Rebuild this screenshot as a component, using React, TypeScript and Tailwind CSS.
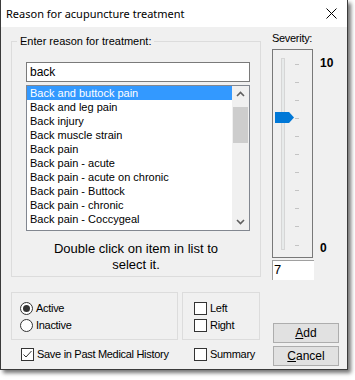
import React from "react";

const items = [
  "Back and buttock pain",
  "Back and leg pain",
  "Back injury",
  "Back muscle strain",
  "Back pain",
  "Back pain - acute",
  "Back pain - acute on chronic",
  "Back pain - Buttock",
  "Back pain - chronic",
  "Back pain - Coccygeal",
];

function CheckBox({ checked }: { checked?: boolean }) {
  return (
    <span className="w-[13px] h-[13px] border border-[#333333] bg-white flex items-center justify-center shrink-0">
      {checked && (
        <svg width="11" height="11" viewBox="0 0 11 11">
          <path d="M1.5 5.5 L4 8 L9.5 2" fill="none" stroke="#333" strokeWidth="1" />
        </svg>
      )}
    </span>
  );
}

function Radio({ checked }: { checked?: boolean }) {
  return (
    <span className="w-[13px] h-[13px] rounded-full border border-[#333333] bg-white flex items-center justify-center shrink-0">
      {checked && <span className="w-[7px] h-[7px] rounded-full bg-[#333333]" />}
    </span>
  );
}

function Slider() {
  const ticks = Array.from({ length: 11 }, (_, i) => 14.5 + i * 18.1);
  return (
    <svg width="41" height="209" viewBox="0 0 41 209" className="block">
      <rect x="0.5" y="0.5" width="40" height="208" fill="none" stroke="#000" strokeDasharray="1 1" />
      <rect x="9.5" y="9.5" width="3" height="191" fill="#e7eaea" stroke="#d6d6d6" />
      {ticks.map((y, i) => (
        <line key={i} x1="23" y1={Math.round(y) + 0.5} x2="27" y2={Math.round(y) + 0.5} stroke="#c4c4c4" />
      ))}
      <polygon points="3,63 17,63 22,68.5 17,74 3,74" fill="#0078d7" />
    </svg>
  );
}

export default function App() {
  const sys = { fontFamily: '"Liberation Sans", Arial, sans-serif' };
  return (
    <div className="w-[355px] h-[380px] bg-white" style={sys}>
      <div className="w-[348px] h-[370px] bg-[#f0f0f0] border-l border-r border-b border-[#3b3b3b] shadow-[3px_3px_4px_rgba(0,0,0,0.55)] flex flex-col text-black">
        {/* Title bar */}
        <div className="h-[27px] bg-white flex items-center justify-between pl-[5px] pr-[10px]">
          <span className="text-[11px] leading-[14px]" style={{ fontFamily: '"Noto Sans", "Open Sans", sans-serif' }}>
            Reason for acupuncture treatment
          </span>
          <svg width="11" height="11" viewBox="0 0 11 11">
            <path d="M0.5 0.5 L10.5 10.5 M10.5 0.5 L0.5 10.5" stroke="#000" strokeWidth="1" />
          </svg>
        </div>

        {/* Body */}
        <div className="flex flex-col pl-[10px]">
          <div className="flex">
            <fieldset className="mt-[7px] w-[250px] h-[243px] border border-[#dcdcdc] p-0 m-0 min-w-0">
              <legend className="ml-[5px] px-[3px] text-[11px] leading-[14px]">Enter reason for treatment:</legend>
              <div className="ml-[14px] mt-[14px] w-[224px] h-[20px] border border-[#7a7a7a] bg-white flex items-center pl-[3px] text-[12px]">
                back
              </div>
              <div className="ml-[14px] mt-[3px] w-[224px] h-[146px] border border-[#828790] bg-white flex">
                <div className="flex-1 flex flex-col">
                  {items.map((t, i) => (
                    <div
                      key={t}
                      className={
                        "h-[14px] leading-[14px] pl-[3px] text-[11px] whitespace-nowrap " +
                        (i === 0 ? "bg-[#3399ff] text-white" : "")
                      }
                    >
                      {t}
                    </div>
                  ))}
                </div>
                <div className="w-[17px] bg-[#f0f0f0] flex flex-col items-center">
                  <svg width="17" height="17" viewBox="0 0 17 17" className="block">
                    <path d="M5 10 L8.5 6.5 L12 10" fill="none" stroke="#606060" strokeWidth="1.6" />
                  </svg>
                  <div className="w-[15px] h-[36px] bg-[#cdcdcd] mt-[4px]" />
                  <div className="flex-1" />
                  <svg width="17" height="17" viewBox="0 0 17 17" className="block">
                    <path d="M5 7 L8.5 10.5 L12 7" fill="none" stroke="#606060" strokeWidth="1.6" />
                  </svg>
                </div>
              </div>
              <div className="mt-[10px] text-center text-[13px] leading-[16px]">
                Double click on item in list to
                <br />
                select it.
              </div>
            </fieldset>

            {/* Severity column */}
            <div className="ml-[11px] flex flex-col">
              <div className="mt-[4px] text-[11px] leading-[14px] tracking-[-0.3px]">Severity:</div>
              <div className="mt-[4px] flex">
                <Slider />
                <div className="ml-[7px] flex flex-col justify-between pt-[7px] pb-[3px] text-[12px] leading-[14px] font-bold">
                  <span>10</span>
                  <span>0</span>
                </div>
              </div>
              <div className="mt-[2px] w-[42px] h-[20px] bg-white border-t border-l border-[#a0a0a0] text-[13px] leading-[16px] pl-[1px] pt-[1px]">
                7
              </div>
            </div>
          </div>

          {/* Bottom section */}
          <div className="mt-[12px] flex">
            <div className="flex flex-col w-[249px] text-[11px] tracking-[-0.3px]">
              <div className="flex gap-[4px]">
                <div className="w-[167px] h-[48px] border border-[#dcdcdc] pl-[8px] pt-[7px] flex flex-col">
                  <div className="h-[17px] flex items-center gap-[3px]">
                    <Radio checked />
                    <span>Active</span>
                  </div>
                  <div className="h-[17px] flex items-center gap-[3px]">
                    <Radio />
                    <span>Inactive</span>
                  </div>
                </div>
                <div className="w-[78px] h-[48px] border border-[#dcdcdc] pl-[11px] pt-[7px] flex flex-col">
                  <div className="h-[17px] flex items-center gap-[3px]">
                    <CheckBox />
                    <span>Left</span>
                  </div>
                  <div className="h-[17px] flex items-center gap-[3px]">
                    <CheckBox />
                    <span>Right</span>
                  </div>
                </div>
              </div>
              <div className="mt-[6px] flex">
                <div className="w-[171px] pl-[10px] h-[17px] flex items-center gap-[3px]">
                  <CheckBox checked />
                  <span>Save in Past Medical History</span>
                </div>
                <div className="pl-[12px] h-[17px] flex items-center gap-[3px]">
                  <CheckBox />
                  <span>Summary</span>
                </div>
              </div>
            </div>
            <div className="ml-[13px] mt-[31px] flex flex-col gap-[3px]">
              <button className="w-[66px] h-[20px] bg-[#e1e1e1] border border-[#adadad] text-[12px] leading-[14px] flex items-center justify-center">
                <span><span className="underline">A</span>dd</span>
              </button>
              <button className="w-[66px] h-[20px] bg-[#e1e1e1] border border-[#adadad] text-[12px] leading-[14px] flex items-center justify-center">
                <span><span className="underline">C</span>ancel</span>
              </button>
            </div>
          </div>
        </div>
      </div>
    </div>
  );
}
